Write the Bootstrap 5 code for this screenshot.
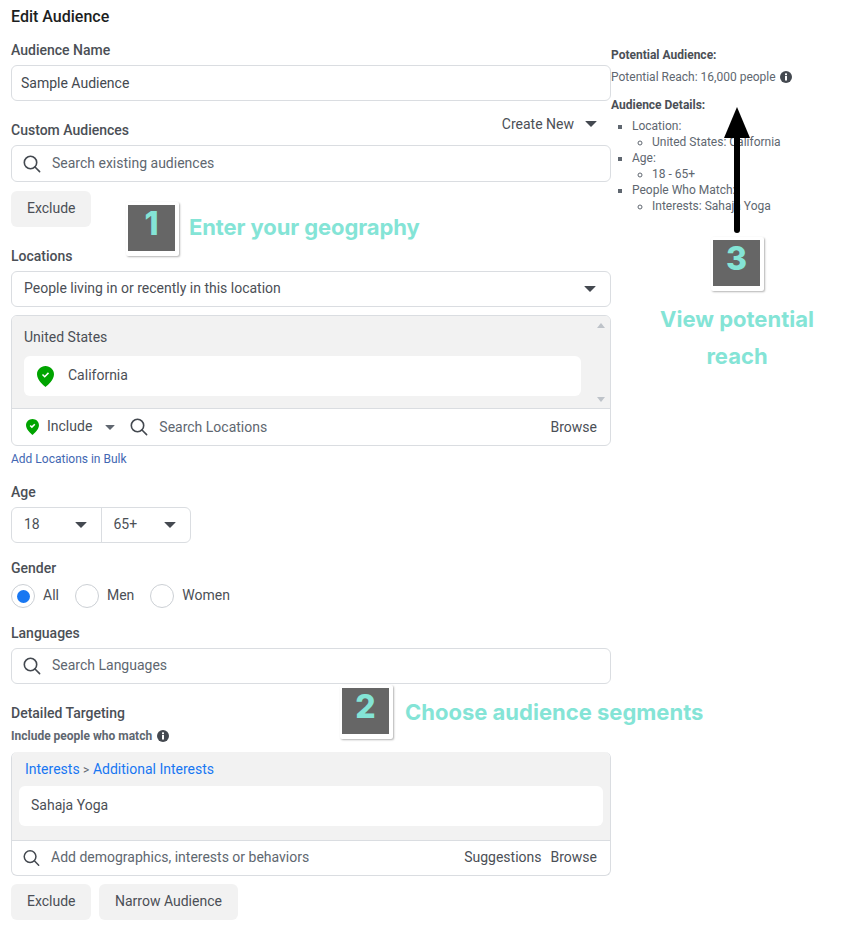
<!DOCTYPE html>
<html lang="en">
<head>
<meta charset="utf-8">
<title>Edit Audience</title>
<link href="https://cdn.jsdelivr.net/npm/bootstrap@5.3.0/dist/css/bootstrap.min.css" rel="stylesheet">
<style>
html,body{background:#fff}
body{font-family:Roboto,"Liberation Sans",sans-serif;font-size:14px;line-height:18px;color:#4b4f56;width:857px;height:949px;overflow:hidden;position:relative}
.page{display:flex;padding:0 0 0 11px;align-items:flex-start}
.form-col{width:600px;flex:none}
.side-col{width:240px;flex:none;padding-top:47px;font-size:12px;line-height:16px;color:#606770}
.ttl{font-size:16px;font-weight:500;color:#1c1e21;line-height:18px;margin:8px 0 0}
.lbl{font-size:14px;font-weight:500;color:#4b4f56;height:18px;line-height:16px;margin:0}
.fld{border:1px solid #dadde1;border-radius:6px;background:#fff;display:flex;align-items:center;color:#4b4f56}
.h35{height:36px}
.ph{color:#606770}
.lift{padding-bottom:2px}
.srch{flex:none;margin-left:11px;margin-right:11px}
.btn-fb{background:#f2f2f2;border:0;border-radius:6px;height:36px;color:#4b4f56;font-size:14px;line-height:18px;padding:0 16px 2px;display:inline-flex;align-items:center}
.caret{width:0;height:0;border-left:6px solid transparent;border-right:6px solid transparent;border-top:6px solid #444950;flex:none;border-radius:1px}
.caret-s{border-left-width:5px;border-right-width:5px;border-top-width:5px;border-top-color:#606770}
.grey{background:#f2f2f2}
.chip{background:#fff;border-radius:6px;display:flex;align-items:center}
.mini{font-size:12px;color:#4267b2;line-height:16px}
.blue{color:#1877f2}
.rad{width:24px;height:24px;border:1px solid #ccd0d5;border-radius:50%;display:flex;align-items:center;justify-content:center;flex:none;background:#fff}
.rad i{display:block;width:13px;height:13px;border-radius:50%;background:#1877f2}
.side-col ul{margin:0;padding-left:21px;list-style:square}
.side-col ul ul{list-style:circle;padding-left:20px}
.side-col li{line-height:16px}
.side-h{font-weight:700;color:#4b4f56;font-size:12px}
.mark-box{position:absolute;width:53px;height:54px;background:#fff;border-radius:2px;box-shadow:1px 1px 2px rgba(0,0,0,.3);padding:3px 4px 5px 2px}
.mark-box div{background:#666;width:47px;height:46px;color:#84e4d6;font:800 32px/38px Inter,sans-serif;text-align:center}
.note{position:absolute;color:#84e4d6;font:700 22px/37px Inter,sans-serif;white-space:nowrap}
.arrow{position:absolute;left:720px;top:105px}
.scr{position:absolute;right:5px;width:0;height:0;border-left:4px solid transparent;border-right:4px solid transparent}
</style>
</head>
<body>
<div class="page">
  <div class="form-col">
    <h1 class="ttl">Edit Audience</h1>
    <p class="lbl" style="margin-top:16px">Audience Name</p>
    <div class="fld h35" style="margin-top:5px;padding-left:9px"><span class="text-nowrap" style="color:#444950">Sample Audience</span></div>

    <div class="d-flex justify-content-between" style="height:39px;align-items:flex-end">
      <p class="lbl">Custom Audiences</p>
      <div class="d-flex align-items-center" style="gap:11px;padding-right:14px;padding-bottom:7px"><span>Create New</span><span class="caret"></span></div>
    </div>
    <div class="fld" style="height:37px;margin-top:5px">
      <svg class="srch" width="18" height="18" viewBox="0 0 18 18" fill="none" stroke="#444950" stroke-width="1.6"><circle cx="7.5" cy="7.5" r="6.2"/><path d="M12 12l4.6 4.6" stroke-linecap="round"/></svg>
      <span class="ph lift">Search existing audiences</span>
    </div>
    <button type="button" class="btn-fb" style="margin-top:9px;width:80px">Exclude</button>

    <p class="lbl" style="margin-top:21px">Locations</p>
    <div class="fld h35 justify-content-between" style="margin-top:5px;padding:0 14px 0 12px"><span class="lift">People living in or recently in this location</span><span class="caret"></span></div>

    <div class="fld flex-column align-items-stretch overflow-hidden position-relative" style="margin-top:8px;height:131px">
      <div class="grey flex-grow-1 position-relative" style="padding:12px 29px 0 12px">
        <div>United States</div>
        <div class="chip" style="height:40px;margin-top:10px;padding-left:13px;gap:14px">
          <svg width="17" height="21" viewBox="0 0 17 21"><path d="M8.5 0C3.8 0 0 3.7 0 8.2c0 5.600 6 10.600 8.500 12.800C11 18.800 17 13.800 17 8.200 17 3.700 13.200 0 8.500 0z" fill="#00a400"/><path d="M5.500 8.500l2.200 2.200 3.800-3.800" fill="none" stroke="#fff" stroke-width="1.500"/></svg>
          <span class="lift">California</span>
        </div>
        <span class="scr" style="top:7px;border-bottom:5px solid #bec3c9"></span>
        <span class="scr" style="bottom:6px;border-top:5px solid #bec3c9"></span>
      </div>
      <div class="d-flex align-items-center" style="height:37px;border-top:1px solid #dadde1;padding:0 13px 0 14px">
        <svg width="13" height="16" viewBox="0 0 17 21" style="flex:none"><path d="M8.500 0C3.800 0 0 3.700 0 8.200c0 5.600 6 10.600 8.500 12.800C11 18.800 17 13.800 17 8.200 17 3.700 13.200 0 8.500 0z" fill="#00a400"/><path d="M5.500 8.500l2.200 2.200 3.800-3.800" fill="none" stroke="#fff" stroke-width="2"/></svg>
        <span style="margin-left:8px;margin-top:-3px">Include</span>
        <span class="caret caret-s" style="margin-left:13px"></span>
        <svg width="18" height="18" viewBox="0 0 18 18" fill="none" stroke="#444950" stroke-width="1.6" style="flex:none;margin-left:15px"><circle cx="7.500" cy="7.500" r="6.200"/><path d="M12 12l4.600 4.600" stroke-linecap="round"/></svg>
        <span class="ph" style="margin-left:11px">Search Locations</span>
        <span class="ms-auto">Browse</span>
      </div>
    </div>
    <div class="mini" style="margin-top:5px">Add Locations in Bulk</div>

    <p class="lbl" style="margin-top:17px">Age</p>
    <div class="fld" style="width:180px;height:36px;margin-top:5px">
      <div class="d-flex align-items-center justify-content-between h-100" style="width:90px;border-right:1px solid #dadde1;padding:0 14px 0 12px"><span class="lift">18</span><span class="caret"></span></div>
      <div class="d-flex align-items-center justify-content-between h-100" style="width:89px;padding:0 14px 0 12px"><span class="lift">65+</span><span class="caret"></span></div>
    </div>

    <p class="lbl" style="margin-top:17px">Gender</p>
    <div class="d-flex align-items-center" style="margin-top:6px;height:24px">
      <span class="rad"><i></i></span><span class="lift" style="margin-left:8px">All</span>
      <span class="rad" style="margin-left:16px"></span><span class="lift" style="margin-left:8px">Men</span>
      <span class="rad" style="margin-left:16px"></span><span class="lift" style="margin-left:8px">Women</span>
    </div>

    <p class="lbl" style="margin-top:17px">Languages</p>
    <div class="fld h35" style="margin-top:5px">
      <svg class="srch" width="18" height="18" viewBox="0 0 18 18" fill="none" stroke="#444950" stroke-width="1.6"><circle cx="7.500" cy="7.500" r="6.200"/><path d="M12 12l4.600 4.600" stroke-linecap="round"/></svg>
      <span class="ph lift">Search Languages</span>
    </div>

    <p class="lbl" style="margin-top:21px">Detailed Targeting</p>
    <div class="d-flex align-items-center" style="margin-top:5px;font-size:12px;font-weight:700;color:#606770;gap:5px;height:16px">
      <span>Include people who match</span>
      <svg width="12" height="12" viewBox="0 0 12 12"><circle cx="6" cy="6" r="6" fill="#444950"/><rect x="5" y="5" width="2" height="4.500" fill="#fff"/><rect x="5" y="2.400" width="2" height="1.800" fill="#fff"/></svg>
    </div>
    <div class="fld flex-column align-items-stretch overflow-hidden" style="margin-top:8px;height:124px;border-top:0">
      <div class="grey flex-grow-1" style="padding:8px 7px 0 7px">
        <div style="padding-left:6px"><span class="blue">Interests</span> <span style="color:#606770;font-size:12px">&gt;</span> <span class="blue">Additional Interests</span></div>
        <div class="chip" style="height:40px;margin-top:7px;padding-left:12px"><span class="lift">Sahaja Yoga</span></div>
      </div>
      <div class="d-flex align-items-center" style="height:35px;border-top:1px solid #dadde1;padding-right:13px">
        <svg class="srch" width="17" height="18" viewBox="0 0 18 18" fill="none" stroke="#444950" stroke-width="1.600"><circle cx="7.500" cy="7.500" r="6.200"/><path d="M12 12l4.600 4.600" stroke-linecap="round"/></svg>
        <span class="ph lift">Add demographics, interests or behaviors</span>
        <span class="ms-auto lift">Suggestions</span><span class="lift" style="margin-left:9px">Browse</span>
      </div>
    </div>
    <div class="d-flex" style="gap:8px;margin-top:8px">
      <button type="button" class="btn-fb" style="width:80px">Exclude</button>
      <button type="button" class="btn-fb" style="width:139px">Narrow Audience</button>
    </div>
  </div>

  <aside class="side-col">
    <div class="side-h">Potential Audience:</div>
    <div class="d-flex align-items-center" style="margin-top:6px;gap:4px;height:16px">
      <span>Potential Reach: 16,000 people</span>
      <svg width="12" height="12" viewBox="0 0 12 12"><circle cx="6" cy="6" r="6" fill="#444950"/><rect x="5" y="5" width="2" height="4.500" fill="#fff"/><rect x="5" y="2.400" width="2" height="1.800" fill="#fff"/></svg>
    </div>
    <div class="side-h" style="margin-top:12px">Audience Details:</div>
    <ul style="margin-top:5px">
      <li>Location:<ul><li>United States: California</li></ul></li>
      <li>Age:<ul><li>18 - 65+</li></ul></li>
      <li>People Who Match:<ul><li>Interests: Sahaja Yoga</li></ul></li>
    </ul>
  </aside>
</div>

<div class="mark-box" style="left:126px;top:202px"><div>1</div></div>
<div class="note" style="left:189px;top:209px;letter-spacing:-.1px">Enter your geography</div>
<div class="mark-box" style="left:340px;top:685px"><div>2</div></div>
<div class="note" style="left:405px;top:694px">Choose audience segments</div>
<div class="mark-box" style="left:711px;top:237px"><div>3</div></div>
<div class="note text-center" style="left:637px;width:200px;top:301px;white-space:normal">View potential<br>reach</div>
<svg class="arrow" width="34" height="130" viewBox="0 0 34 130"><path d="M17 30V125" stroke="#000" stroke-width="6" stroke-linecap="round"/><path d="M17 2L30 33H4z" fill="#000"/></svg>
<script src="https://cdn.jsdelivr.net/npm/bootstrap@5.3.0/dist/js/bootstrap.bundle.min.js"></script>
</body>
</html>
